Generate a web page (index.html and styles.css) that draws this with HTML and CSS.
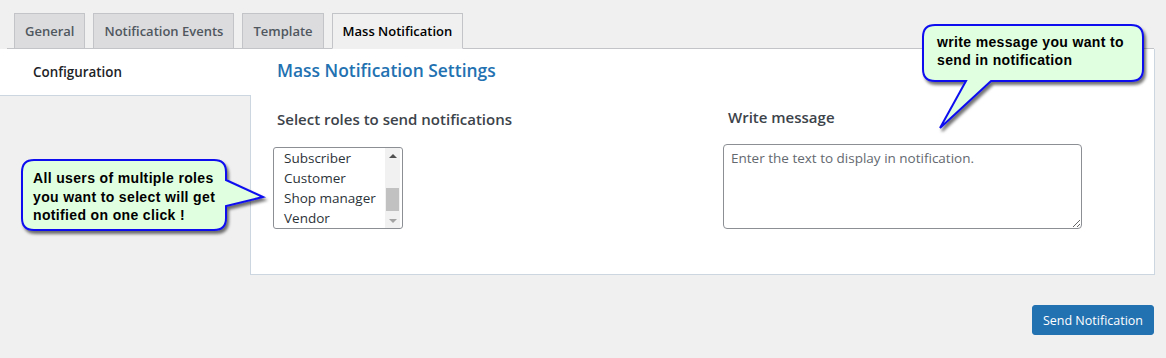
FILE: index.html
```html
<!DOCTYPE html>
<html lang="en">
<head>
    <meta charset="UTF-8">
    <meta name="viewport" content="width=device-width, initial-scale=1.0">
    <title>Mass Notification</title>
    <link rel="stylesheet" href="styles.css">
</head>
<body>
    <nav class="tabs">
        <a class="tab">General</a>
        <a class="tab">Notification Events</a>
        <a class="tab">Template</a>
        <a class="tab active">Mass Notification</a>
    </nav>

    <div class="settings">
        <div class="side">
            <div class="side-item">Configuration</div>
            <div class="side-rest"></div>
        </div>
        <div class="panel">
            <h2 class="panel-title">Mass Notification Settings</h2>
            <div class="fields">
                <div class="field roles">
                    <label class="field-label">Select roles to send notifications</label>
                    <div class="listbox">
                        <ul class="options">
                            <li>Subscriber</li>
                            <li>Customer</li>
                            <li>Shop manager</li>
                            <li>Vendor</li>
                        </ul>
                        <div class="scrollbar">
                            <span class="arrow up"></span>
                            <span class="track"><span class="thumb"></span></span>
                            <span class="arrow down"></span>
                        </div>
                    </div>
                </div>
                <div class="field message">
                    <label class="field-label">Write message</label>
                    <textarea class="message-box" placeholder="Enter the text to display in notification."></textarea>
                </div>
            </div>
        </div>
    </div>

    <div class="actions">
        <button class="send-btn">Send Notification</button>
    </div>

    <!-- help callouts -->
    <div class="callout callout-roles">
        <svg class="callout-shape" width="260" height="90" viewBox="0 0 260 90">
            <defs>
                <filter id="shadowA" x="-10%" y="-10%" width="130%" height="140%">
                    <feDropShadow dx="2" dy="3" stdDeviation="1.5" flood-color="#000" flood-opacity="0.55"/>
                </filter>
            </defs>
            <path d="M16 6 H196 Q208 6 208 18 V26 L245 43 L208 52 V64 Q208 76 196 76 H16 Q4 76 4 64 V18 Q4 6 16 6 Z"
                  fill="#e0ffe0" stroke="#1010f0" stroke-width="2" filter="url(#shadowA)"/>
        </svg>
        <p class="callout-text">All users of multiple roles<br>you want to select will get<br>notified on one click !</p>
    </div>

    <div class="callout callout-message">
        <svg class="callout-shape" width="240" height="120" viewBox="0 0 240 120">
            <defs>
                <filter id="shadowB" x="-10%" y="-10%" width="130%" height="140%">
                    <feDropShadow dx="2" dy="3" stdDeviation="1.5" flood-color="#000" flood-opacity="0.55"/>
                </filter>
            </defs>
            <path d="M16 4 H212 Q224 4 224 16 V48 Q224 60 212 60 H72 L21 107 L47 60 H16 Q4 60 4 48 V16 Q4 4 16 4 Z"
                  fill="#e0ffe0" stroke="#1010f0" stroke-width="2" filter="url(#shadowB)"/>
        </svg>
        <p class="callout-text">write message you want to<br>send in notification</p>
    </div>
</body>
</html>
```

FILE: styles.css
```css
body {
    margin: 0;
    background-color: #f0f0f1;
    font-family: 'Open Sans', 'Noto Sans', sans-serif;
    color: #1d2327;
    position: relative;
}

/* top tabs */
.tabs {
    display: flex;
    gap: 8px;
    margin: 0 12px 0 7px;
    padding: 13px 0 0 7px;
    border-bottom: 1px solid #c3c4c7;
}

.tab {
    display: block;
    padding: 0 10px;
    height: 34px;
    line-height: 34px;
    font-size: 13px;
    font-weight: 600;
    color: #50575e;
    background-color: #dcdcde;
    border: 1px solid #c3c4c7;
    border-bottom: none;
    margin-bottom: -1px;
}

.tab.active {
    background-color: #f0f0f1;
    color: #000;
    border-bottom: 1px solid #f0f0f1;
}

/* settings area */
.settings {
    display: flex;
    margin-right: 11px;
}

.side {
    width: 251px;
    display: flex;
    flex-direction: column;
}

.side-item {
    background-color: #fff;
    height: 46px;
    line-height: 46px;
    padding-left: 33px;
    font-size: 13.4px;
    font-weight: 600;
    color: #1d2327;
}

.side-rest {
    flex: 1;
    border-top: 1px solid #ccd6e0;
    border-right: 1px solid #ccd6e0;
}

.panel {
    flex: 1;
    background-color: #fff;
    border-right: 1px solid #ccd6e0;
    border-bottom: 1px solid #ccd6e0;
    padding: 9px 0 45px 22px;
}

.panel-title {
    margin: 0 0 0 4px;
    font-size: 17.4px;
    line-height: 24px;
    font-weight: 600;
    color: #2271b1;
}

.fields {
    display: flex;
    margin-top: 25px;
}

.field {
    display: flex;
    flex-direction: column;
    align-items: flex-start;
}

.roles {
    width: 450px;
    padding-top: 2px;
}

.field-label {
    margin-left: 4px;
    font-size: 15px;
    line-height: 20px;
    font-weight: 600;
    color: #3c434a;
}

.message .field-label {
    margin-left: 5px;
}

/* multi select list */
.listbox {
    margin-top: 18px;
    width: 128px;
    height: 80px;
    border: 1px solid #8c8f94;
    border-radius: 3px;
    display: flex;
    overflow: hidden;
    background-color: #fff;
}

.options {
    flex: 1;
    list-style: none;
    margin: 0;
    padding: 0 0 0 10px;
}

.options li {
    height: 20px;
    line-height: 20px;
    font-size: 13.5px;
    color: #2c3338;
    white-space: nowrap;
}

.scrollbar {
    width: 15px;
    margin-right: 2px;
    display: flex;
    flex-direction: column;
    background-color: #f1f1f1;
}

.arrow {
    height: 15px;
    display: flex;
    align-items: center;
    justify-content: center;
}

.arrow::before {
    content: "";
    border-left: 4px solid transparent;
    border-right: 4px solid transparent;
}

.arrow.up::before {
    border-bottom: 4px solid #505050;
}

.arrow.down::before {
    border-top: 4px solid #a3a3a3;
}

.track {
    flex: 1;
    display: flex;
    flex-direction: column;
    justify-content: flex-end;
    padding: 0 1px 2px;
}

.thumb {
    height: 23px;
    background-color: #c1c1c1;
}

/* message textarea */
.message-box {
    margin-top: 17px;
    width: 359px;
    height: 85px;
    box-sizing: border-box;
    border: 1px solid #8c8f94;
    border-radius: 4px;
    padding: 3px 7px;
    font-family: 'Open Sans', 'Noto Sans', sans-serif;
    font-size: 13.5px;
    line-height: 20px;
    color: #2c3338;
}

.message-box::placeholder {
    color: #646970;
}

/* bottom button */
.actions {
    display: flex;
    justify-content: flex-end;
    margin: 30px 12px 0 0;
}

.send-btn {
    height: 30px;
    padding: 0 10px;
    background-color: #2271b1;
    border: 1px solid #2271b1;
    border-radius: 3px;
    color: #fff;
    font-family: 'Open Sans', 'Noto Sans', sans-serif;
    font-size: 12.5px;
}

/* callouts */
.callout {
    position: absolute;
}

.callout-shape {
    position: absolute;
    left: 0;
    top: 0;
}

.callout-text {
    position: relative;
    margin: 0;
    font-family: 'Liberation Sans', Arial, sans-serif;
    font-weight: bold;
    font-size: 14px;
    line-height: 18.5px;
    letter-spacing: 0.35px;
    color: #000;
    white-space: nowrap;
}

.callout-roles {
    left: 18px;
    top: 154px;
}

.callout-roles .callout-text {
    padding: 15px 0 0 15px;
}

.callout-message {
    left: 919px;
    top: 21px;
}

.callout-message .callout-text {
    padding: 13px 0 0 18px;
    line-height: 17.5px;
}
```
